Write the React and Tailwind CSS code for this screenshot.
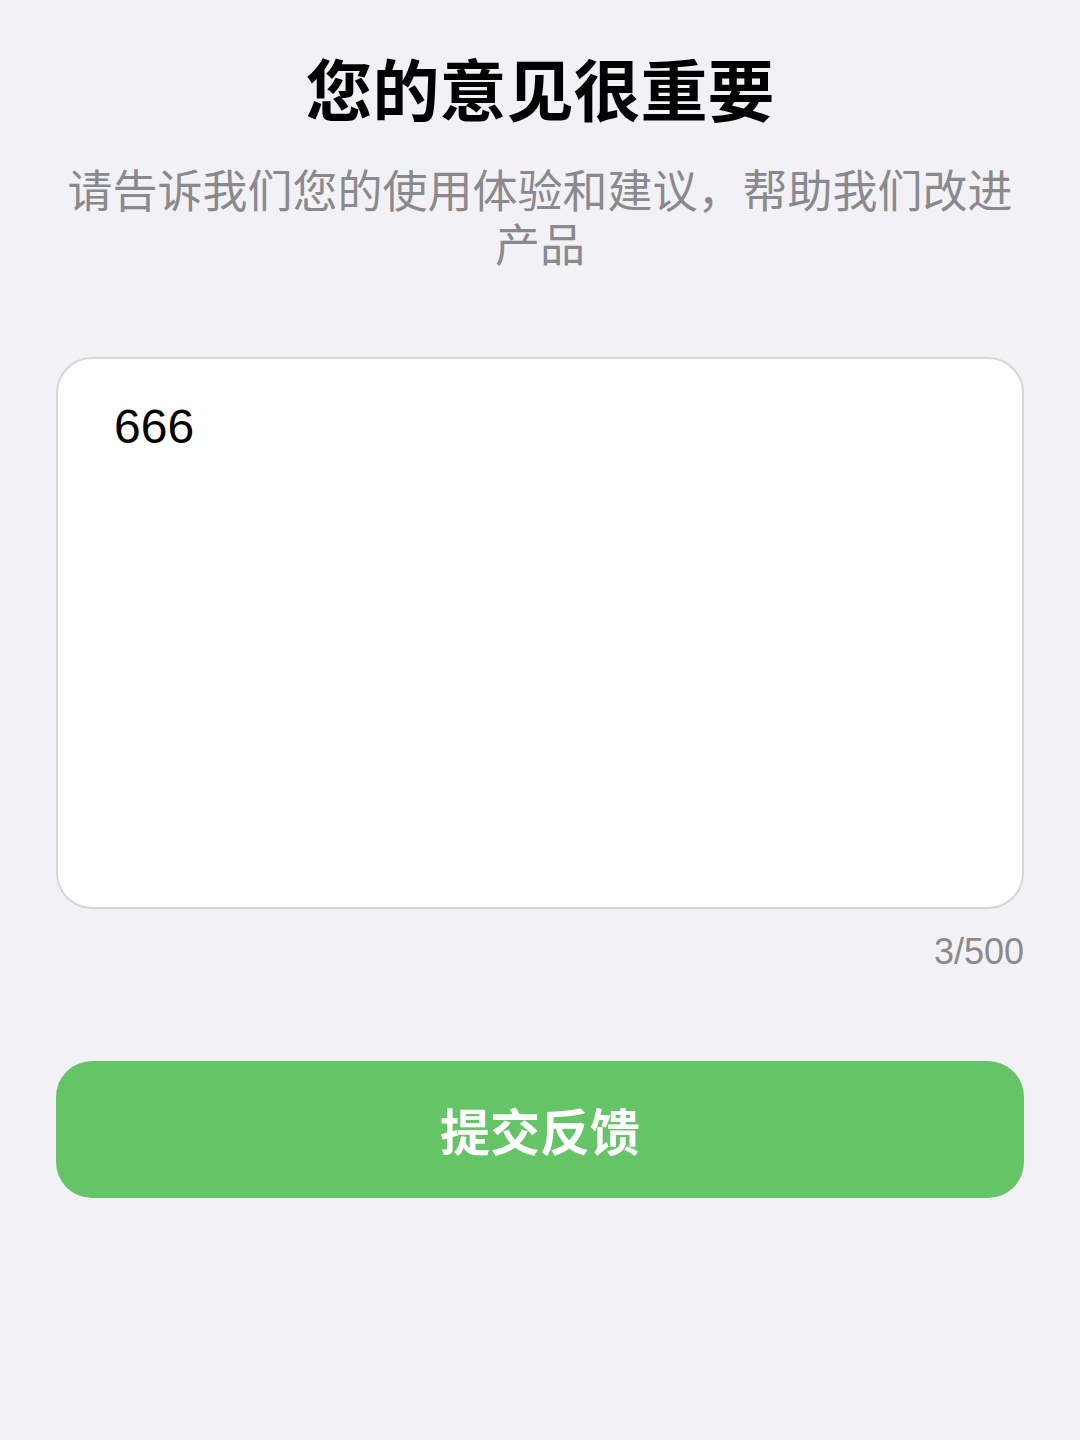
import React, { useState } from 'react';

const cjk = "font-['Noto_Sans_CJK_SC','Noto_Sans',sans-serif]";

const App = () => {
  const [text, setText] = useState('666');

  return (
    <div className={`min-h-[1440px] w-full bg-[#f2f2f6] px-[56px] pt-[51px] ${cjk}`}>
      <h1 className="text-center text-[67px] leading-[72px] font-bold text-black">您的意见很重要</h1>
      <p className="mt-[39px] text-center text-[45px] leading-[54px] text-[#8a8a8e]">
        请告诉我们您的使用体验和建议，帮助我们改进产品
      </p>

      <div className="mt-[87px]">
        <textarea
          value={text}
          maxLength={500}
          onChange={(e) => setText(e.target.value)}
          className="block h-[552px] w-full resize-none rounded-[36px] border-2 border-[#d6d6da] bg-white pl-[56px] pr-[40px] pt-[40px] text-[48px] leading-[56px] text-black outline-none font-['Liberation_Sans','Noto_Sans_CJK_SC',sans-serif]"
        />
        <div className="mt-[21px] text-right text-[36px] leading-[44px] text-[#8a8a8e] font-['Liberation_Sans',sans-serif]">
          {text.length}/500
        </div>
      </div>

      <button
        type="button"
        className="mt-[87px] flex h-[137px] w-full items-center justify-center rounded-[36px] bg-[#65c466] text-[50px] font-bold text-white"
      >
        提交反馈
      </button>
    </div>
  );
};

export default App;
